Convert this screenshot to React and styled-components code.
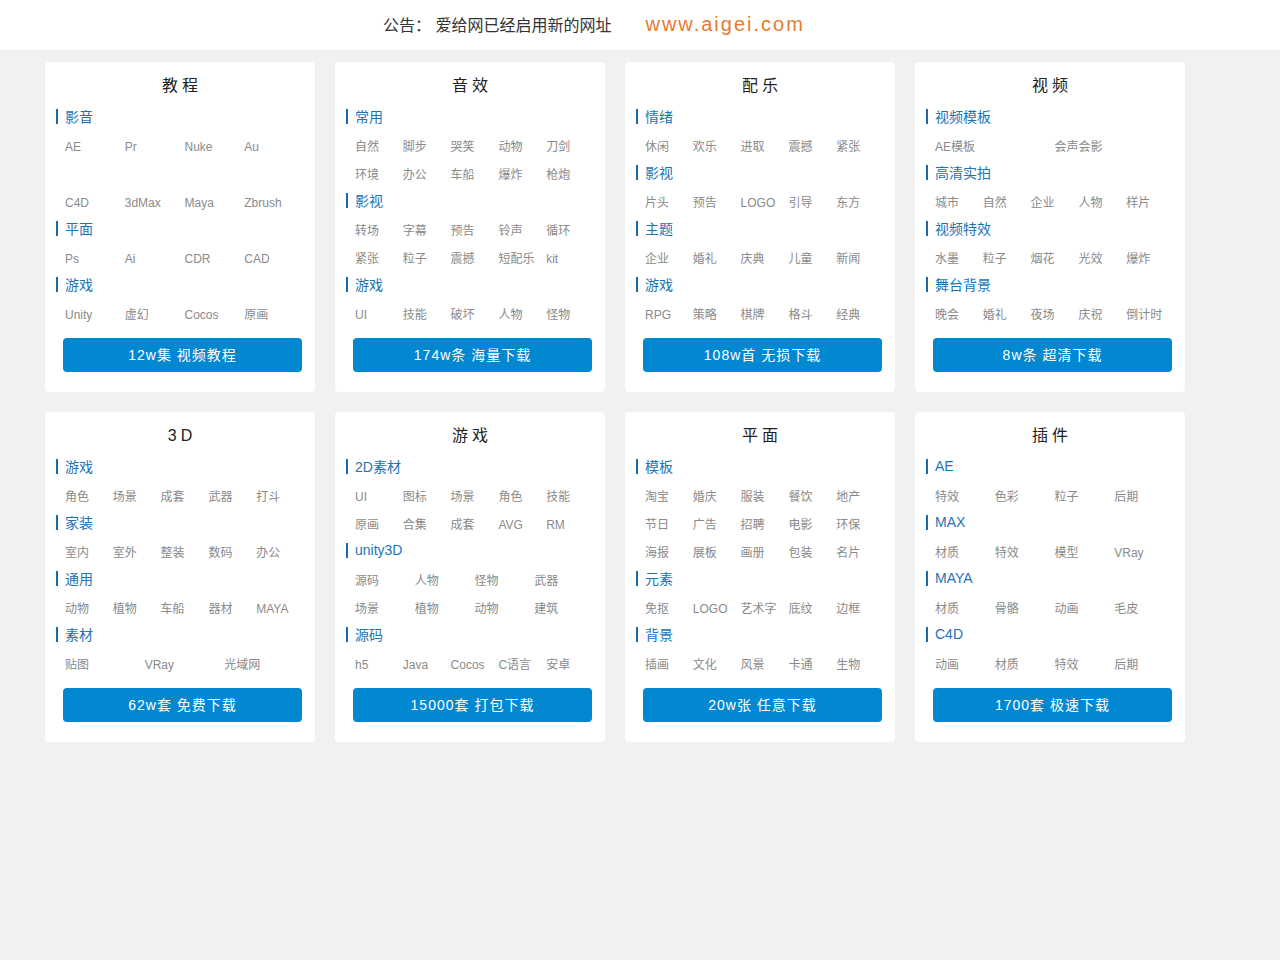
import React from 'react';
import styled, { createGlobalStyle } from 'styled-components';

const GlobalStyle = createGlobalStyle`
  body {
    margin: 0;
    background: #f1f1f1;
    font-family: "Liberation Sans", "Noto Sans CJK SC", sans-serif;
  }
`;

const Notice = styled.div`
  height: 50px;
  padding-bottom: 2px;
  box-sizing: border-box;
  background: #fff;
  display: flex;
  align-items: center;
  padding-left: 383px;
  font-size: 16px;
  color: #333;
`;

const Site = styled.span`
  margin-left: 34px;
  font-size: 20px;
  letter-spacing: 2px;
  color: #e47b2f;
`;

const Grid = styled.div`
  width: 1190px;
  margin: 12px auto 0;
  display: grid;
  grid-template-columns: repeat(4, 270px);
  gap: 20px;
`;

const Card = styled.div`
  background: #fff;
  border-radius: 4px;
  padding: 8px 11px 20px;
`;

const Title = styled.h3`
  margin: 0 0 4px;
  padding-top: 2px;
  height: 28px;
  line-height: 28px;
  text-align: center;
  font-size: 16px;
  font-weight: normal;
  letter-spacing: 4px;
  text-indent: 4px;
  color: #222;
`;

const Heading = styled.div`
  box-sizing: border-box;
  height: 28px;
  padding-bottom: 4px;
  display: flex;
  align-items: center;
  font-size: 14px;
  color: #1e73b5;
  &::before {
    content: '';
    width: 2px;
    height: 15px;
    margin-right: 7px;
    background: #1a6aa8;
  }
`;

const Items = styled.div`
  width: 239px;
  margin-left: 9px;
  display: grid;
  grid-template-columns: repeat(${p => p.cols}, 1fr);
  grid-auto-rows: 28px;
  min-height: ${p => p.rows * 28}px;
`;

const Item = styled.a`
  padding-top: 2px;
  line-height: 26px;
  font-size: 12px;
  color: #8a8a8a;
  white-space: nowrap;
  text-decoration: none;
`;

const Button = styled.a`
  display: block;
  width: 239px;
  height: 34px;
  margin: 10px 0 0 7px;
  border-radius: 4px;
  background: #0288d1;
  color: #fff;
  font-size: 14px;
  letter-spacing: 1px;
  line-height: 34px;
  text-align: center;
  text-decoration: none;
`;

const cards = [
  {
    title: '教程', button: '12w集 视频教程',
    groups: [
      { name: '影音', cols: 4, items: ['AE', 'Pr', 'Nuke', 'Au', '', '', '', '', 'C4D', '3dMax', 'Maya', 'Zbrush'] },
      { name: '平面', cols: 4, items: ['Ps', 'Ai', 'CDR', 'CAD'] },
      { name: '游戏', cols: 4, items: ['Unity', '虚幻', 'Cocos', '原画'] },
    ],
  },
  {
    title: '音效', button: '174w条 海量下载',
    groups: [
      { name: '常用', cols: 5, items: ['自然', '脚步', '哭笑', '动物', '刀剑', '环境', '办公', '车船', '爆炸', '枪炮'] },
      { name: '影视', cols: 5, items: ['转场', '字幕', '预告', '铃声', '循环', '紧张', '粒子', '震撼', '短配乐', 'kit'] },
      { name: '游戏', cols: 5, items: ['UI', '技能', '破坏', '人物', '怪物'] },
    ],
  },
  {
    title: '配乐', button: '108w首 无损下载',
    groups: [
      { name: '情绪', cols: 5, items: ['休闲', '欢乐', '进取', '震撼', '紧张'] },
      { name: '影视', cols: 5, items: ['片头', '预告', 'LOGO', '引导', '东方'] },
      { name: '主题', cols: 5, items: ['企业', '婚礼', '庆典', '儿童', '新闻'] },
      { name: '游戏', cols: 5, items: ['RPG', '策略', '棋牌', '格斗', '经典'] },
    ],
  },
  {
    title: '视频', button: '8w条 超清下载',
    groups: [
      { name: '视频模板', cols: 2, items: ['AE模板', '会声会影'] },
      { name: '高清实拍', cols: 5, items: ['城市', '自然', '企业', '人物', '样片'] },
      { name: '视频特效', cols: 5, items: ['水墨', '粒子', '烟花', '光效', '爆炸'] },
      { name: '舞台背景', cols: 5, items: ['晚会', '婚礼', '夜场', '庆祝', '倒计时'] },
    ],
  },
  {
    title: '3D', button: '62w套 免费下载',
    groups: [
      { name: '游戏', cols: 5, items: ['角色', '场景', '成套', '武器', '打斗'] },
      { name: '家装', cols: 5, items: ['室内', '室外', '整装', '数码', '办公'] },
      { name: '通用', cols: 5, items: ['动物', '植物', '车船', '器材', 'MAYA'] },
      { name: '素材', cols: 3, items: ['贴图', 'VRay', '光域网'] },
    ],
  },
  {
    title: '游戏', button: '15000套 打包下载',
    groups: [
      { name: '2D素材', cols: 5, items: ['UI', '图标', '场景', '角色', '技能', '原画', '合集', '成套', 'AVG', 'RM'] },
      { name: 'unity3D', cols: 4, items: ['源码', '人物', '怪物', '武器', '场景', '植物', '动物', '建筑'] },
      { name: '源码', cols: 5, items: ['h5', 'Java', 'Cocos', 'C语言', '安卓'] },
    ],
  },
  {
    title: '平面', button: '20w张 任意下载',
    groups: [
      { name: '模板', cols: 5, items: ['淘宝', '婚庆', '服装', '餐饮', '地产', '节日', '广告', '招聘', '电影', '环保', '海报', '展板', '画册', '包装', '名片'] },
      { name: '元素', cols: 5, items: ['免抠', 'LOGO', '艺术字', '底纹', '边框'] },
      { name: '背景', cols: 5, items: ['插画', '文化', '风景', '卡通', '生物'] },
    ],
  },
  {
    title: '插件', button: '1700套 极速下载',
    groups: [
      { name: 'AE', cols: 4, items: ['特效', '色彩', '粒子', '后期'] },
      { name: 'MAX', cols: 4, items: ['材质', '特效', '模型', 'VRay'] },
      { name: 'MAYA', cols: 4, items: ['材质', '骨骼', '动画', '毛皮'] },
      { name: 'C4D', cols: 4, items: ['动画', '材质', '特效', '后期'] },
    ],
  },
];

export default function App() {
  return (
    <>
      <GlobalStyle />
      <Notice>
        公告： 爱给网已经启用新的网址
        <Site>www.aigei.com</Site>
      </Notice>
      <Grid>
        {cards.map(card => (
          <Card key={card.title}>
            <Title>{card.title}</Title>
            {card.groups.map(g => (
              <div key={g.name}>
                <Heading>{g.name}</Heading>
                <Items cols={g.cols} rows={Math.ceil(g.items.length / g.cols)}>
                  {g.items.map((it, i) => (
                    <Item key={i}>{it}</Item>
                  ))}
                </Items>
              </div>
            ))}
            <Button>{card.button}</Button>
          </Card>
        ))}
      </Grid>
    </>
  );
}
